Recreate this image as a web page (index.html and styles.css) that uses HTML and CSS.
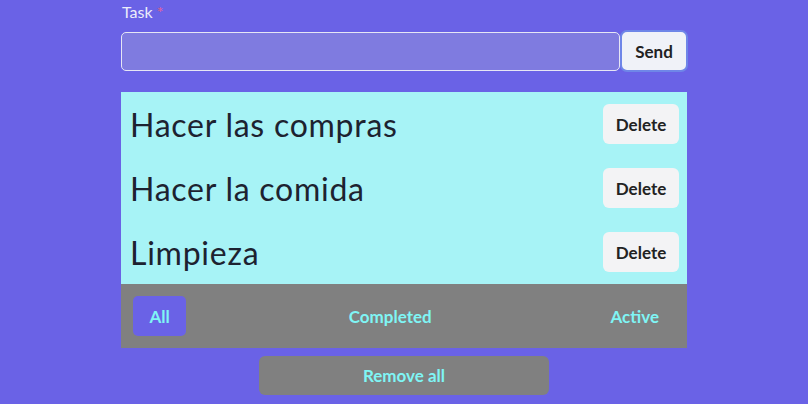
FILE: index.html
```html
<!DOCTYPE html>
<html lang="es">
<head>
<meta charset="utf-8">
<title>Tasks</title>
<link rel="stylesheet" href="styles.css">
</head>
<body>
<main class="app">
  <form class="task-form">
    <label class="label" for="task">Task <span class="req">*</span></label>
    <div class="input-row">
      <input id="task" class="input" type="text">
      <button type="button" class="send">Send</button>
    </div>
  </form>
  <ul class="list">
    <li class="item"><span class="item-text">Hacer las compras</span><button class="delete">Delete</button></li>
    <li class="item"><span class="item-text">Hacer la comida</span><button class="delete">Delete</button></li>
    <li class="item"><span class="item-text">Limpieza</span><button class="delete">Delete</button></li>
  </ul>
  <div class="filters">
    <button class="filter active">All</button>
    <button class="filter">Completed</button>
    <button class="filter">Active</button>
  </div>
  <div class="remove-wrap">
    <button class="remove">Remove all</button>
  </div>
</main>
</body>
</html>
```
FILE: styles.css
```css
* { box-sizing: border-box; }
body {
  margin: 0;
  background: #6a62e6;
  font-family: "Lato", "Noto Sans", sans-serif;
}
.app {
  width: 566px;
  margin: 0 auto;
}
.task-form {
  display: flex;
  flex-direction: column;
}
.label {
  color: #ececfa;
  font-size: 16px;
  line-height: 20px;
  padding-top: 2px;
  height: 30px;
  padding-left: 1px;
}
.req { color: #e3608f; }
.input-row {
  display: flex;
  align-items: center;
  height: 42px;
}
.input {
  flex: 1;
  height: 39px;
  border: 1px solid #e6e6f5;
  border-radius: 5px;
  background: #7f7be0;
  outline: none;
}
.send {
  width: 68px;
  height: 42px;
  margin-right: -1px;
  border: 2px solid #6f86e8;
  border-radius: 7px;
  background: #f0f2f8;
  color: #222;
  font-family: inherit;
  font-weight: 700;
  font-size: 17px;
}
.list {
  list-style: none;
  margin: 20px 0 0;
  padding: 0;
  background: #a7f3f6;
}
.item {
  height: 64px;
  display: flex;
  align-items: center;
  justify-content: space-between;
  padding: 0 8px 0 9px;
}
.item-text {
  font-size: 32px;
  letter-spacing: 0.75px;
  color: #1d2230;
}
.delete {
  width: 76px;
  height: 40px;
  border: none;
  border-radius: 6px;
  background: #f3f3f5;
  color: #222;
  font-family: inherit;
  font-weight: 700;
  font-size: 17px;
}
.filters {
  height: 64px;
  background: #808080;
  display: flex;
  align-items: center;
  justify-content: space-between;
  padding: 0 12px;
}
.filter {
  height: 40px;
  padding: 0 16px;
  border: none;
  border-radius: 5px;
  background: transparent;
  color: #7ff5f5;
  font-family: inherit;
  font-weight: 700;
  font-size: 17px;
}
.filter.active {
  background: #6a62e6;
  width: 53px;
  padding: 0;
}
.remove-wrap {
  display: flex;
  justify-content: center;
  padding-top: 8px;
}
.remove {
  width: 290px;
  height: 39px;
  border: none;
  border-radius: 6px;
  background: #808080;
  color: #7ff5f5;
  font-family: inherit;
  font-weight: 700;
  font-size: 17px;
}
```
